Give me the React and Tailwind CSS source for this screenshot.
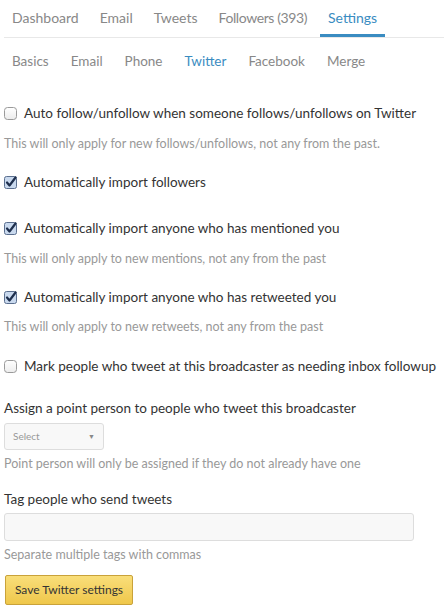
import React from 'react';

const mainTabs = ['Dashboard', 'Email', 'Tweets', 'Followers (393)', 'Settings'];
const subTabs = ['Basics', 'Email', 'Phone', 'Twitter', 'Facebook', 'Merge'];

const Box = ({ checked }) =>
  checked ? (
    <svg width="13" height="13" viewBox="0 0 13 13" className="shrink-0">
      <rect x="0.5" y="0.5" width="12" height="12" rx="2" fill="#c9d9ee" stroke="#5b6f8f" />
      <path d="M3 6.5 L5.5 9.5 L11.5 1.5" fill="none" stroke="#1e2f4d" strokeWidth="2.2" strokeLinecap="round" strokeLinejoin="round" />
    </svg>
  ) : (
    <svg width="13" height="13" viewBox="0 0 13 13" className="shrink-0">
      <defs>
        <linearGradient id="ub" x1="0" y1="0" x2="0" y2="1">
          <stop offset="0" stopColor="#ffffff" />
          <stop offset="1" stopColor="#ececec" />
        </linearGradient>
      </defs>
      <rect x="0.5" y="0.5" width="12" height="12" rx="3" fill="url(#ub)" stroke="#9a9a9a" />
    </svg>
  );

const Check = ({ checked, label, className = '' }) => (
  <div className={`flex items-center gap-[7px] h-[20px] text-[13.5px] leading-[20px] text-[#333] ${className}`}>
    <Box checked={checked} />
    <span>{label}</span>
  </div>
);

const Help = ({ children, className = '' }) => (
  <p className={`text-[12.5px] leading-[18px] text-[#999] ${className}`}>{children}</p>
);

export default function App() {
  return (
    <div className="w-[444px] h-[611px] bg-white overflow-hidden" style={{ fontFamily: 'Lato, "Open Sans", sans-serif' }}>
      <div className="ml-[4px] flex border-b border-[#e8e8e8] h-[38px]">
        {mainTabs.map((t) => (
          <div
            key={t}
            className={`px-[8px] mr-[5px] text-[14px] leading-[36px] ${
              t === 'Settings' ? 'text-[#3a8cc1] border-b-[3px] border-[#3a8cc1]' : 'text-[#888]'
            } ${t === 'Followers (393)' ? 'tracking-[-0.4px]' : ''}`}
          >
            {t}
          </div>
        ))}
      </div>

      <div className="ml-[4px] flex mt-[10px] h-[28px]">
        {subTabs.map((t) => (
          <div key={t} className={`px-[8px] mr-[6px] text-[13.5px] leading-[26px] ${t === 'Twitter' ? 'text-[#3a8cc1]' : 'text-[#888]'}`}>
            {t}
          </div>
        ))}
      </div>

      <div className="pl-[4px] pt-[27px]">
        <Check label="Auto follow/unfollow when someone follows/unfollows on Twitter" />
        <Help className="mt-[12px]">This will only apply for new follows/unfollows, not any from the past.</Help>

        <Check checked className="mt-[19px]" label="Automatically import followers" />

        <Check checked className="mt-[26px]" label="Automatically import anyone who has mentioned you" />
        <Help className="mt-[12px]">This will only apply to new mentions, not any from the past</Help>

        <Check checked className="mt-[19px]" label="Automatically import anyone who has retweeted you" />
        <Help className="mt-[11px]">This will only apply to new retweets, not any from the past</Help>

        <Check className="mt-[20px]" label="Mark people who tweet at this broadcaster as needing inbox followup" />

        <p className="mt-[22px] text-[13.5px] leading-[20px] text-[#333]">Assign a point person to people who tweet this broadcaster</p>
        <div className="mt-[5px] w-[100px] h-[27px] border border-[#ddd] rounded-[3px] bg-[#f8f8f8] flex items-center justify-between pl-[8px] pr-[8px] text-[10px] text-[#999]">
          <span>Select</span>
          <span className="text-[7px] text-[#888]">▼</span>
        </div>
        <Help className="mt-[5px]">Point person will only be assigned if they do not already have one</Help>

        <p className="mt-[16px] text-[13.5px] leading-[20px] text-[#333]">Tag people who send tweets</p>
        <div className="mt-[4px] w-[410px] h-[28px] border border-[#ddd] rounded-[3px] bg-[#f8f8f8]" />
        <Help className="mt-[5px]">Separate multiple tags with commas</Help>

        <button className="mt-[11px] ml-[1px] w-[128px] h-[30px] border border-[#c9a23a] rounded-[2px] bg-gradient-to-b from-[#f9de79] to-[#efc74a] text-[12px] text-[#333]">
          Save Twitter settings
        </button>
      </div>
    </div>
  );
}
